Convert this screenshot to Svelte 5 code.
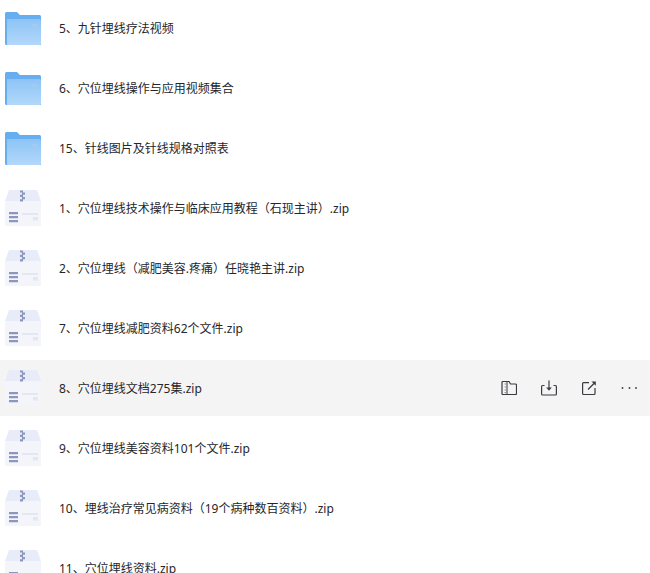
<script>
  const files = [
    { name: "5、九针埋线疗法视频", type: "folder" },
    { name: "6、穴位埋线操作与应用视频集合", type: "folder" },
    { name: "15、针线图片及针线规格对照表", type: "folder" },
    { name: "1、穴位埋线技术操作与临床应用教程（石现主讲）.zip", type: "zip" },
    { name: "2、穴位埋线（减肥美容.疼痛）任晓艳主讲.zip", type: "zip" },
    { name: "7、穴位埋线减肥资料62个文件.zip", type: "zip" },
    { name: "8、穴位埋线文档275集.zip", type: "zip", hover: true },
    { name: "9、穴位埋线美容资料101个文件.zip", type: "zip" },
    { name: "10、埋线治疗常见病资料（19个病种数百资料）.zip", type: "zip" },
    { name: "11、穴位埋线资料.zip", type: "zip" }
  ];
</script>

<ul class="list">
  {#each files as file}
    <li class="row" class:hover={file.hover}>
      {#if file.type === "folder"}
        <svg class="icon" width="36" height="36" viewBox="0 0 36 36">
          <defs>
            <linearGradient id="folderFront" x1="0" y1="0" x2="0" y2="1">
              <stop offset="0" stop-color="#8cc4f6" />
              <stop offset="1" stop-color="#b3d8fa" />
            </linearGradient>
          </defs>
          <path d="M0 3.5Q0 2 1.5 2H12L15 5H34.5Q36 5 36 6.5V35H1.5Q0 35 0 33.5Z" fill="#66aef0" />
          <path d="M2 9H34.5Q36 9 36 10.5V33.5Q36 35 34.5 35H2Z" fill="url(#folderFront)" />
          <rect x="27" y="14" width="5" height="1" fill="#a3cdf5" />
          <rect x="27" y="16" width="5" height="1" fill="#a3cdf5" />
        </svg>
      {:else}
        <svg class="icon" width="36" height="36" viewBox="0 0 36 36">
          <path d="M4 0H32L36 11H0Z" fill="#e8ebf8" />
          <path d="M0 11H36V34.5Q36 36 34.5 36H1.5Q0 36 0 34.5Z" fill="#f3f5fb" />
          <path d="M15 0.5H18V2.5H15ZM17 2.5H20V4.8H17ZM15 4.8H18V7H15ZM17 7H20V9.2H17ZM15 9.2H18V11.5H15Z" fill="#8d97bd" />
          <path d="M4 22H13V24.2H4ZM4 26H13V28.2H4ZM4 30H13V32.2H4Z" fill="#8d97bd" />
          <path d="M17 23H33V25H17ZM28 27H33V30.5H28Z" fill="#e4e7f2" />
        </svg>
      {/if}
      <span class="name">{file.name}</span>
      {#if file.hover}
        <div class="actions">
          <svg width="16" height="16" viewBox="0 0 16 16" fill="none" stroke="#3a3b40" stroke-width="1.2">
            <path d="M1 2.5Q1 1.5 2 1.5H8L9.5 4H14.5Q15.5 4 15.5 5V13.5Q15.5 14.5 14.5 14.5H2Q1 14.5 1 13.5Z" />
            <path d="M6 1.5V14.5" stroke-width="1" />
            <path d="M3.5 4H5M3.5 7H5M3.5 10H5M3.5 12.5H5" stroke-width="0.8" stroke="#777" />
          </svg>
          <svg width="16" height="16" viewBox="0 0 16 16" fill="none" stroke="#3a3b40" stroke-width="1.2">
            <path d="M3.5 5.5H1.5Q0.6 5.5 0.6 6.5V14Q0.6 15 1.5 15H14.5Q15.4 15 15.4 14V6.5Q15.4 5.5 14.5 5.5H12.5" />
            <path d="M8 0.5V9" />
            <path d="M5.2 7.5L8 10.8L10.8 7.5Z" fill="#3a3b40" stroke="none" />
          </svg>
          <svg width="16" height="16" viewBox="0 0 16 16" fill="none" stroke="#3a3b40" stroke-width="1.2">
            <path d="M8 2.6H2.5Q1.6 2.6 1.6 3.6V13.5Q1.6 14.5 2.5 14.5H13Q14 14.5 14 13.5V8" />
            <path d="M7 9.5L13 3.5" />
            <path d="M10.5 1.5H14.8V5.8Z" fill="#3a3b40" stroke="none" />
          </svg>
          <svg width="16" height="16" viewBox="0 0 16 16" fill="#3a3b40">
            <circle cx="1.5" cy="8" r="0.9" />
            <circle cx="8.5" cy="8" r="0.9" />
            <circle cx="15" cy="8" r="0.9" />
          </svg>
        </div>
      {/if}
    </li>
  {/each}
</ul>

<style>
  :global(body) {
    background: #fff;
    overflow: hidden;
  }

  .list {
    list-style: none;
    margin: 0;
    padding: 0;
    height: 573px;
    overflow: hidden;
    display: flex;
    flex-direction: column;
    gap: 4px;
    font-family: "Noto Sans", "Noto Sans CJK SC", sans-serif;
  }

  .row {
    flex: none;
    height: 56px;
    display: flex;
    align-items: center;
    padding: 0 13px 0 5px;
  }

  .row.hover {
    background: #f4f4f4;
  }

  .icon {
    flex: none;
    margin-right: 18px;
  }

  .name {
    flex: 1;
    font-size: 12px;
    line-height: 16px;
    padding-top: 1px;
    color: #25262b;
    white-space: nowrap;
  }

  .actions {
    display: flex;
    align-items: center;
    gap: 24px;
  }
</style>
